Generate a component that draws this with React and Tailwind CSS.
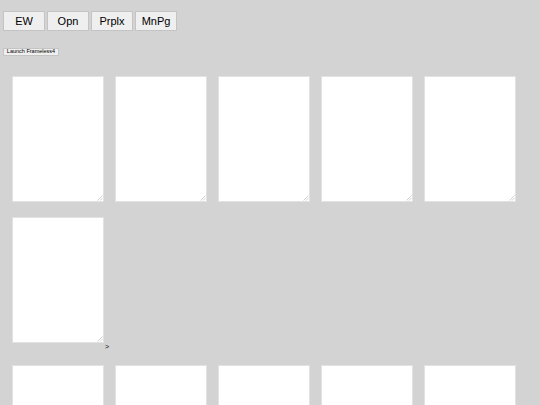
import React from "react";

function TA() {
  return (
    <div className="relative w-[92px] h-[126px] shrink-0">
      <textarea
        readOnly
        className="block w-full h-full bg-white border border-[#e2e2e2] resize-none outline-none"
      />
      <svg
        className="absolute right-[1px] bottom-[1px] pointer-events-none"
        width="6"
        height="6"
        viewBox="0 0 6 6"
      >
        <path d="M5.5 0.5 L0.5 5.5 M5.5 3 L3 5.5" stroke="#c8c8c8" strokeWidth="0.8" />
      </svg>
    </div>
  );
}

export default function App() {
  const btn =
    "w-[42px] h-[20px] bg-[#efefef] border border-[#c4c4c4] text-[11px] leading-none text-black flex items-center justify-center";
  return (
    <div className="w-[540px] h-[405px] overflow-hidden bg-[#d3d3d3] font-['Liberation_Sans',Arial,sans-serif]">
      <div className="pt-[11px] pl-[3px] flex gap-[2px]">
        <button className={btn}>EW</button>
        <button className={btn}>Opn</button>
        <button className={btn}>Prplx</button>
        <button className={btn}>MnPg</button>
      </div>
      <div className="pt-[17px] pl-[3px]">
        <button className="w-[56px] h-[8px] bg-[#efefef] border border-[#c4c4c4] text-[5.5px] leading-none text-black flex items-center justify-center whitespace-nowrap">
          Launch Frameless4
        </button>
      </div>
      <div className="pt-[20px] pl-[12px] flex flex-wrap gap-x-[11px] gap-y-[15px] w-[530px]">
        <TA />
        <TA />
        <TA />
        <TA />
        <TA />
        <div className="flex items-end">
          <TA />
          <span className="text-[7px] leading-none text-black ml-[1px] mb-[-7px]">&gt;</span>
        </div>
      </div>
      <div className="pt-[22px] pl-[12px] flex gap-x-[11px]">
        <TA />
        <TA />
        <TA />
        <TA />
        <TA />
      </div>
    </div>
  );
}
